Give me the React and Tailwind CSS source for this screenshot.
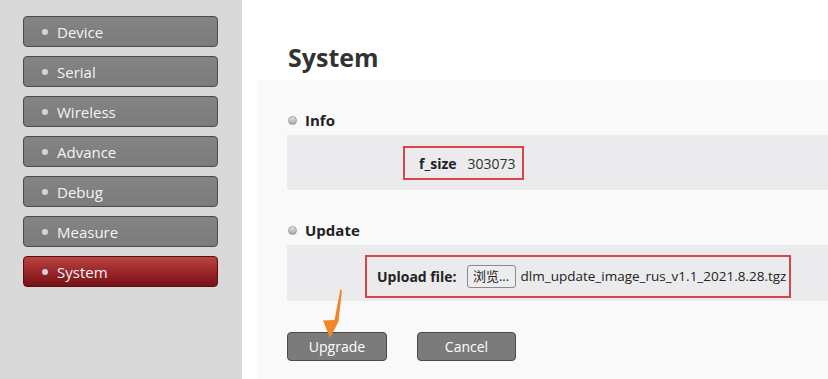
import React from 'react';

const navItems = ['Device', 'Serial', 'Wireless', 'Advance', 'Debug', 'Measure', 'System'];

function NavButton({ label, active }) {
  return (
    <button
      type="button"
      className={`flex items-center h-[31px] w-[195px] rounded-[4px] border text-left text-[15px] text-[#f4f4f4] ${
        active
          ? 'border-[#5a0f12] bg-gradient-to-b from-[#b8453f] via-[#9a262a] to-[#761217]'
          : 'border-[#4b4b4b] bg-gradient-to-b from-[#848484] to-[#7b7b7b]'
      }`}
    >
      <span className="ml-[18px] w-[6px] h-[6px] rounded-full bg-[#d6d6d6]" />
      <span className="ml-[9px] pt-[1px]">{label}</span>
    </button>
  );
}

function SectionTitle({ children }) {
  return (
    <div className="flex items-center h-[20px] pl-[31px]">
      <span className="w-[9px] h-[9px] rounded-full border border-[#9a9a9a] bg-gradient-to-b from-[#e6e6e6] to-[#a8a8a8]" />
      <span className="ml-[8px] text-[15px] font-bold text-[#222]">{children}</span>
    </div>
  );
}

export default function App() {
  return (
    <div
      className="relative flex h-[379px] w-[828px] overflow-hidden bg-white"
      style={{ fontFamily: '"Open Sans", "Noto Sans", "Noto Sans CJK SC", sans-serif' }}
    >
      {/* sidebar */}
      <aside className="w-[242px] shrink-0 bg-[#d9d9d9] pt-[16px] pl-[23px]">
        <div className="flex flex-col gap-[9px]">
          {navItems.map((n) => (
            <NavButton key={n} label={n} active={n === 'System'} />
          ))}
        </div>
      </aside>

      {/* main */}
      <main className="flex-1 flex flex-col">
        <div className="h-[80px] pl-[46px] pt-[42px]">
          <h1 className="text-[25px] leading-[30px] font-bold text-[#333]">System</h1>
        </div>

        <div className="flex-1 ml-[15px] bg-[#f9f9f9] pt-[30px]">
          <SectionTitle>Info</SectionTitle>
          <div className="mt-[5px] ml-[30px] h-[56px] bg-[#ebebed] border-b border-white pt-[11px] pl-[116px]">
            <div className="flex items-center h-[34px] w-[121px] border-2 border-[#d9434a] pl-[14px] text-[14px] text-[#222]">
              <span className="font-bold">f_size</span>
              <span className="ml-[11px] text-[#333]">303073</span>
            </div>
          </div>

          <div className="mt-[29px]">
            <SectionTitle>Update</SectionTitle>
          </div>
          <div className="mt-[5px] ml-[30px] h-[56px] bg-[#ebebed] pt-[10px] pl-[78px]">
            <div className="flex items-center h-[43px] w-[426px] border-2 border-[#d9434a] pl-[10px] text-[14px] text-[#222]">
              <span className="font-bold">Upload file:</span>
              <span className="ml-[10px] flex items-center justify-center h-[23px] w-[49px] rounded-[3px] border border-[#8a8a8a] bg-[#ededed] text-[13px]">
                浏览...
              </span>
              <span className="ml-[5px] text-[13.5px]">dlm_update_image_rus_v1.1_2021.8.28.tgz</span>
            </div>
          </div>

          <div className="mt-[31px] ml-[30px] flex gap-[30px]">
            <button
              type="button"
              className="h-[29px] w-[100px] rounded-[4px] border border-[#4a4a4a] bg-[#7b7b7b] text-[14px] text-white"
            >
              Upgrade
            </button>
            <button
              type="button"
              className="h-[29px] w-[99px] rounded-[4px] border border-[#4a4a4a] bg-[#7b7b7b] text-[14px] text-white"
            >
              Cancel
            </button>
          </div>
        </div>
      </main>

      {/* annotation arrow */}
      <svg className="absolute left-[318px] top-[286px]" width="30" height="56" viewBox="0 0 30 56">
        <polygon points="22.5,3 24,4.5 20.5,35.5 12,52 5,34.5 16.5,34" fill="#f0862a" />
      </svg>
    </div>
  );
}
